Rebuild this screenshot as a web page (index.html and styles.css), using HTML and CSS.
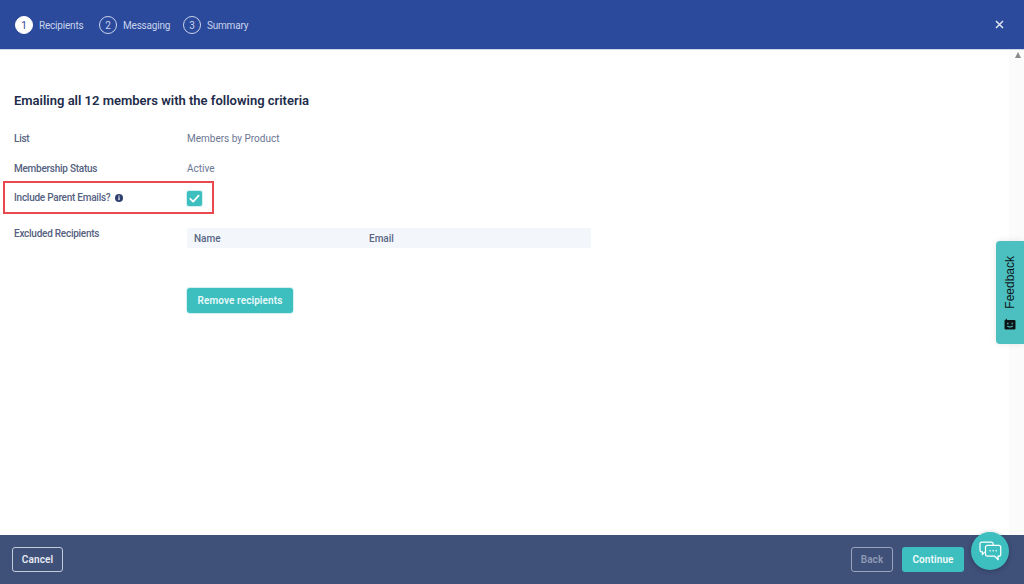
FILE: index.html
```html
<!DOCTYPE html>
<html lang="en">
<head>
<meta charset="utf-8">
<title>Email recipients</title>
<link rel="stylesheet" href="styles.css">
</head>
<body>
<div class="app">
  <header class="topbar">
    <ol class="steps">
      <li class="step step-active"><span class="step-num">1</span><span>Recipients</span></li>
      <li class="step"><span class="step-num">2</span><span>Messaging</span></li>
      <li class="step"><span class="step-num">3</span><span>Summary</span></li>
    </ol>
    <svg class="close" width="9" height="9" viewBox="0 0 9 9" aria-label="Close"><path d="M1 1l7 7M8 1l-7 7" stroke="#dfe5f3" stroke-width="1.5" fill="none"/></svg>
  </header>
  <div class="middle">
    <main class="content">
      <h1 class="title">Emailing all 12 members with the following criteria</h1>
      <div class="row row-list"><div class="label">List</div><div class="value">Members by Product</div></div>
      <div class="row row-status"><div class="label">Membership Status</div><div class="value">Active</div></div>
      <div class="row row-parent">
        <div class="label label-info">Include Parent Emails?
          <svg class="info" width="8" height="8" viewBox="0 0 8 8"><circle cx="4" cy="4" r="4" fill="#2e3f70"/><rect x="3.4" y="3.3" width="1.2" height="2.8" fill="#fff"/><rect x="3.4" y="1.6" width="1.2" height="1.1" fill="#fff"/></svg>
        </div>
        <div class="checkbox"><svg width="15" height="15" viewBox="0 0 15 15"><path d="M3.3 7.8l2.9 2.8 5.4-6" stroke="#fff" stroke-width="1.8" fill="none" stroke-linecap="round" stroke-linejoin="round"/></svg></div>
      </div>
      <div class="row row-excluded">
        <div class="label">Excluded Recipients</div>
        <div class="table-wrap">
          <div class="table-head"><span class="col-name">Name</span><span>Email</span></div>
          <button class="btn btn-remove" type="button">Remove recipients</button>
        </div>
      </div>
    </main>
    <div class="scrollbar"><span class="scroll-up"></span></div>
  </div>
  <footer class="bottombar">
    <button class="btn btn-outline" type="button">Cancel</button>
    <div class="actions">
      <button class="btn btn-outline btn-disabled" type="button">Back</button>
      <button class="btn btn-continue" type="button">Continue</button>
    </div>
  </footer>
  <aside class="feedback">
    <span class="feedback-text">Feedback</span>
    <svg class="feedback-icon" width="12" height="12" viewBox="0 0 12 12"><path d="M.5 2.500L3 .5v1.500h7.500a1 1 0 0 1 1 1v7.500a1 1 0 0 1-1 1h-9a1 1 0 0 1-1-1z" fill="#0d1418"/><path d="M3.800 4.800v1.400M8.200 4.800v1.400" stroke="#4cc0c0" stroke-width="1.200" fill="none"/><path d="M3.300 7.800c1.500 1.500 3.900 1.500 5.400 0" stroke="#4cc0c0" stroke-width="1.100" fill="none"/></svg>
  </aside>
  <div class="chat">
    <svg width="23" height="21" viewBox="0 0 26 24"><path d="M16 4.500V3.200A2 2 0 0 0 14 1.200H3A2 2 0 0 0 1 3.200v7.300a2 2 0 0 0 2 2h.8l-.1 3 2.900-3" stroke="#fff" stroke-width="1.400" fill="none" stroke-linejoin="round"/><path d="M9.500 5h13a2.200 2.200 0 0 1 2.200 2.200v8a2.200 2.200 0 0 1-2.200 2.200h-1l.3 4-4-4H9.500a2.200 2.200 0 0 1-2.200-2.200v-8A2.200 2.200 0 0 1 9.500 5z" fill="#3dbfc0" stroke="#fff" stroke-width="1.400" stroke-linejoin="round"/><circle cx="12.500" cy="11.200" r=".9" fill="#fff"/><circle cx="16" cy="11.200" r=".9" fill="#fff"/><circle cx="19.500" cy="11.200" r=".9" fill="#fff"/></svg>
  </div>
</div>
</body>
</html>
```

FILE: styles.css
```css
*, *::before { box-sizing: border-box; }
html, body { margin: 0; height: 100%; overflow: hidden; }
body { font-family: "Roboto", "Liberation Sans", sans-serif; color: #5a6685; background: #fff; }
.app { position: relative; display: flex; flex-direction: column; height: 584px; width: 1024px; }

.topbar { flex: 0 0 50px; display: flex; align-items: center; justify-content: space-between; padding: 1px 20px 0 15px; background: #2b4a9b; border-bottom: 1px solid #cfd6e6; }
.steps { display: grid; grid-template-columns: repeat(3, 84px); list-style: none; margin: 0; padding: 0; }
.step { display: flex; align-items: center; gap: 6px; font-size: 10px; letter-spacing: -.2px; color: #c9d3ec; white-space: nowrap; }
.step-num { display: flex; align-items: center; justify-content: center; width: 18px; height: 18px; border: 1px solid #c9d3ec; border-radius: 50%; font-size: 10px; }
.step-active .step-num { background: #fff; border-color: #fff; color: #2b4a9b; }
.close { display: block; margin-bottom: 2px; }

.middle { flex: 1; display: flex; min-height: 0; }
.content { flex: 1; padding: 43px 0 0 14px; }
.title { margin: 0 0 22px; font-size: 13px; line-height: 16px; font-weight: 600; color: #212b4a; }
.row { display: flex; font-size: 10px; }
.label { flex: 0 0 173px; padding-top: 1px; line-height: 14px; font-weight: 500; color: #55617f; letter-spacing: -.25px; }
.value { padding-top: 1px; line-height: 14px; color: #6b7693; }
.row-list { height: 30px; }
.row-status { height: 29px; }
.row-parent { position: relative; height: 36px; }
.row-parent::before { content: ""; position: absolute; left: -11px; top: -9px; width: 211px; height: 33px; border: 2px solid #e8484e; }
.label-info { display: flex; align-items: flex-start; gap: 5px; }
.info { margin-top: 3px; }
.checkbox { width: 15px; height: 15px; margin-top: 1px; background: #3dbfc0; border-radius: 2px; box-shadow: 0 0 0 1px #cfeeee; }
.checkbox svg { display: block; }
.table-wrap { width: 404px; margin-top: 2px; }
.table-head { display: flex; align-items: center; height: 20px; padding-left: 7px; background: #f3f6fb; border-radius: 2px; font-weight: 500; color: #5a6685; font-size: 10px; }
.col-name { width: 175px; }

.btn { font-family: inherit; font-size: 10px; font-weight: 600; letter-spacing: .1px; border-radius: 3px; cursor: pointer; }
.btn-remove { display: block; margin-top: 40px; width: 106px; height: 25px; padding: 0; color: #e8f9f9; background: #3dbfc0; border: 0; box-shadow: 0 0 0 1px #d5f0f0; }

.scrollbar { flex: 0 0 15px; background: #fbfbfb; padding: 2px 0 0 6px; }
.scroll-up { display: block; width: 0; height: 0; border-left: 3.500px solid transparent; border-right: 3.500px solid transparent; border-bottom: 6px solid #8a8a8a; }

.bottombar { flex: 0 0 49px; display: flex; align-items: center; justify-content: space-between; padding: 0 60px 0 12px; background: #3f5079; }
.actions { display: flex; gap: 9px; }
.btn-outline { width: 51px; height: 25px; padding: 0; color: #e6eaf3; background: transparent; border: 1px solid #c4cbdc; }
.btn-disabled { width: 42px; color: #8f9ab4; border-color: #98a3bc; }
.btn-continue { width: 62px; height: 25px; padding: 0; color: #f0fbfb; background: #3dbfc0; border: 0; }

.feedback { position: absolute; right: 0; top: 241px; width: 28px; height: 103px; display: flex; flex-direction: column; align-items: center; gap: 9px; padding-top: 15px; background: #4cc0c0; border-radius: 4px 0 0 4px; box-shadow: 0 0 6px rgba(0,0,0,.1); }
.feedback-text { writing-mode: vertical-rl; transform: rotate(180deg); font-family: "Liberation Sans", sans-serif; font-size: 12px; line-height: 14px; color: #0d1418; }
.feedback-icon { display: block; }
.chat { position: absolute; left: 971px; top: 532px; width: 38px; height: 38px; display: flex; align-items: center; justify-content: center; background: #3dbfc0; border-radius: 50%; box-shadow: 0 1px 5px rgba(0,0,0,.25); }
```
